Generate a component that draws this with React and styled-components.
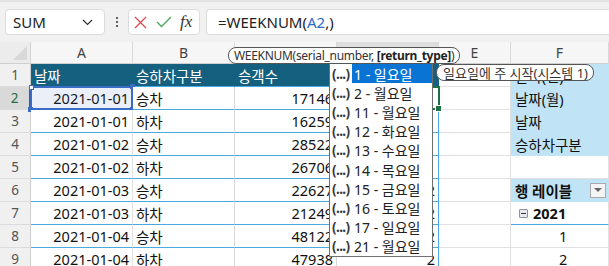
import React from 'react'
import styled, { createGlobalStyle } from 'styled-components'

const GlobalStyle = createGlobalStyle`
  body {
    margin: 0;
    background: #fff;
    font-family: "Noto Sans", "Noto Sans CJK KR", sans-serif;
    overflow: hidden;
  }
`

const tableRows = [
  { date: '2021-01-01', kind: '승차', count: '17146', week: '1' },
  { date: '2021-01-01', kind: '하차', count: '16259', week: '1' },
  { date: '2021-01-02', kind: '승차', count: '28522', week: '1' },
  { date: '2021-01-02', kind: '하차', count: '26706', week: '1' },
  { date: '2021-01-03', kind: '승차', count: '22627', week: '2' },
  { date: '2021-01-03', kind: '하차', count: '21249', week: '2' },
  { date: '2021-01-04', kind: '승차', count: '48122', week: '2' },
  { date: '2021-01-04', kind: '하차', count: '47938', week: '2' },
]

const weekOptions = [
  ['1', '일요일'], ['2', '월요일'], ['11', '월요일'], ['12', '화요일'], ['13', '수요일'],
  ['14', '목요일'], ['15', '금요일'], ['16', '토요일'], ['17', '일요일'], ['21', '월요일'],
]

const Page = styled.div`
  width: 609px;
  height: 266px;
  overflow: hidden;
`

/* ---------- formula bar ---------- */
const TopBar = styled.div`
  height: 42px;
  box-sizing: border-box;
  background: #f1f1f1;
  border-top: 2px solid #e4e4e4;
  display: flex;
  align-items: center;
  padding-left: 5px;
`
const NameBox = styled.div`
  width: 100px;
  height: 26px;
  box-sizing: border-box;
  background: #fff;
  border: 1px solid #dcdcdc;
  border-radius: 4px;
  display: flex;
  align-items: center;
  justify-content: space-between;
  padding: 0 11px 0 7px;
  font-size: 15px;
  color: #222;
`
const Dots = styled.div`
  width: 23px;
  display: flex;
  flex-direction: column;
  align-items: center;
  gap: 2px;
  span {
    width: 2px;
    height: 2px;
    background: #333;
    border-radius: 1px;
  }
`
const ButtonBox = styled.div`
  width: 72px;
  height: 26px;
  box-sizing: border-box;
  background: #fff;
  border: 1px solid #dcdcdc;
  border-radius: 4px;
  display: flex;
  align-items: center;
  padding-left: 5px;
  gap: 9px;
`
const Fx = styled.span`
  font-family: "Liberation Serif", serif;
  font-style: italic;
  font-size: 17px;
  color: #333;
  margin-left: -1px;
`
const Formula = styled.div`
  flex: 1;
  margin-left: 6px;
  height: 26px;
  box-sizing: border-box;
  background: #fff;
  border: 1px solid #dcdcdc;
  border-right: none;
  border-radius: 4px 0 0 4px;
  display: flex;
  align-items: center;
  padding-left: 11px;
  font-size: 15px;
  color: #222;
`
const Ref = styled.span`
  color: #2c6bc9;
`

/* ---------- grid ---------- */
const Sheet = styled.div`
  position: relative;
  display: grid;
  grid-template-columns: 31px 102px 102px 102px 102px 72px 98px;
  grid-template-rows: 22px repeat(9, 23px);
`
const Corner = styled.div`
  background: #ececec;
  border-right: 1px solid #d4d4d4;
  border-bottom: 1px solid #cfcfcf;
  position: relative;
  &::after {
    content: '';
    position: absolute;
    right: 3px;
    bottom: 3px;
    border-left: 14px solid transparent;
    border-bottom: 14px solid #d8d8d8;
  }
`
const ColHead = styled.div`
  display: flex;
  align-items: center;
  justify-content: center;
  font-size: 14px;
  color: #444;
  background: ${p => (p.$active ? '#dedede' : '#f6f6f6')};
  border-right: 1px solid #d9d9d9;
  border-bottom: ${p => (p.$active ? '2px solid #217346' : '1px solid #cfcfcf')};
`
const RowHead = styled.div`
  display: flex;
  align-items: center;
  justify-content: center;
  font-size: 13.5px;
  color: ${p => (p.$active ? '#1d6e41' : '#555')};
  background: ${p => (p.$active ? '#d9d9d9' : '#f0f0f0')};
  border-right: ${p => (p.$active ? '2px solid #217346' : '1px solid #cfcfcf')};
  border-bottom: 1px solid #dcdcdc;
`
const Cell = styled.div`
  position: relative;
  display: flex;
  align-items: center;
  justify-content: ${p => (p.$right ? 'flex-end' : 'flex-start')};
  padding: 0 ${p => (p.$right ? '3px' : '0')} 0 ${p => p.$indent || 3}px;
  font-size: 14.5px;
  font-weight: ${p => (p.$bold ? 700 : 400)};
  color: #111;
  white-space: nowrap;
  background: ${p => p.$bg || '#fff'};
  border-right: 1px solid ${p => p.$vline || '#e1e1e1'};
  border-bottom: 1px solid ${p => p.$hline || '#e1e1e1'};
`
const HeadCell = styled(Cell)`
  color: #fff;
  background: #16607f;
  border-right-color: #16607f;
  border-bottom-color: #4aa9de;
`
const RefBox = styled.div`
  position: absolute;
  inset: -1px -1px -1px -1px;
  border: 2px solid #3b6cc4;
  background: rgba(60, 100, 190, 0.1);
  pointer-events: none;
  span {
    position: absolute;
    width: 5px;
    height: 5px;
    background: #3b6cc4;
  }
`
const ActiveBox = styled.div`
  position: absolute;
  inset: -1px -2px -1px -1px;
  border: 2px solid #1e7145;
  z-index: 1;
  &::after {
    content: '';
    position: absolute;
    right: -4px;
    bottom: -4px;
    width: 5px;
    height: 5px;
    background: #1e7145;
    border: 1px solid #fff;
  }
`
const FilterButton = styled.div`
  margin-left: auto;
  margin-right: 2px;
  width: 16px;
  height: 15px;
  box-sizing: border-box;
  border: 1px solid #a9a9a9;
  background: #f4f4f4;
  display: flex;
  align-items: center;
  justify-content: center;
  &::after {
    content: '';
    border-left: 4px solid transparent;
    border-right: 4px solid transparent;
    border-top: 4px solid #666;
  }
`
const Collapse = styled.span`
  width: 9px;
  height: 9px;
  box-sizing: border-box;
  border: 1px solid #8a94a6;
  background: #e6e9ee;
  border-radius: 1px;
  margin-right: 5px;
  display: flex;
  align-items: center;
  justify-content: center;
  &::after {
    content: '';
    width: 5px;
    height: 1px;
    background: #3a3a3a;
  }
`

/* ---------- popups ---------- */
const Tip = styled.div`
  position: absolute;
  z-index: 6;
  height: 17px;
  box-sizing: border-box;
  background: #fff;
  border: 1.5px solid #555;
  border-radius: 8px;
  display: flex;
  align-items: center;
  color: #333;
  white-space: nowrap;
`
const SyntaxTip = styled(Tip)`
  left: 228px;
  top: 5px;
  padding: 0 5px;
  font-size: 12px;
  letter-spacing: -0.3px;
  b {
    font-weight: 700;
    color: #222;
  }
`
const HintTip = styled(Tip)`
  left: 436px;
  top: 22px;
  padding: 0 5px 0 6px;
  font-size: 13px;
`
const Dropdown = styled.ul`
  position: absolute;
  z-index: 5;
  left: 329px;
  top: 21px;
  width: 104px;
  margin: 0;
  padding: 0;
  list-style: none;
  box-sizing: border-box;
  background: #fff;
  border: 1px solid #707070;
`
const Option = styled.li`
  display: flex;
  height: 19.2px;
`
const OptIcon = styled.span`
  width: 20px;
  display: flex;
  align-items: center;
  padding-left: 2px;
  font-size: 13.5px;
  font-weight: 700;
  letter-spacing: -0.6px;
  color: #3a3a3a;
`
const OptLabel = styled.span`
  flex: 1;
  display: flex;
  align-items: center;
  padding-left: 2px;
  font-size: 14px;
  color: ${p => (p.$active ? '#fff' : '#222')};
  background: ${p => (p.$active ? '#0a74d4' : 'transparent')};
`

const pivotBlue = '#c0e4f5'
const rowLine = '#4aa9de'

const pivotCells = [
  { text: '날짜(연)', bg: pivotBlue },
  { text: '날짜(월)', bg: pivotBlue },
  { text: '날짜', bg: pivotBlue },
  { text: '승하차구분', bg: pivotBlue },
  { text: '' },
]

function PivotColumn(i) {
  if (i < 5) {
    const c = pivotCells[i]
    return (
      <Cell key="f" $bg={c.bg} $vline={c.bg || '#e1e1e1'} $hline={c.bg || '#e1e1e1'} $indent={4}>
        {c.text}
      </Cell>
    )
  }
  if (i === 5) {
    return (
      <Cell key="f" $bg={pivotBlue} $vline={pivotBlue} $hline={pivotBlue} $indent={4} $bold>
        행 레이블
        <FilterButton />
      </Cell>
    )
  }
  if (i === 6) {
    return (
      <Cell key="f" $hline={rowLine} $indent={8} $bold>
        <Collapse />
        2021
      </Cell>
    )
  }
  return (
    <Cell key="f" $indent={48}>
      {i - 6}
    </Cell>
  )
}

export default function App() {
  return (
    <Page>
      <GlobalStyle />
      <TopBar>
        <NameBox>
          SUM
          <svg width="11" height="7" viewBox="0 0 11 7">
            <polyline points="1,1 5.5,5.5 10,1" fill="none" stroke="#333" strokeWidth="1.2" />
          </svg>
        </NameBox>
        <Dots>
          <span />
          <span />
          <span />
        </Dots>
        <ButtonBox>
          <svg width="13" height="13" viewBox="0 0 13 13">
            <path d="M1 1 L12 12 M12 1 L1 12" stroke="#e2494f" strokeWidth="1.3" />
          </svg>
          <svg width="16" height="12" viewBox="0 0 16 12">
            <polyline points="1,6 5.5,10.5 15,1" fill="none" stroke="#4aa85a" strokeWidth="1.3" />
          </svg>
          <Fx>fx</Fx>
        </ButtonBox>
        <Formula>
          =WEEKNUM(<Ref>A2</Ref>,)
        </Formula>
      </TopBar>

      <Sheet>
        <Corner />
        {['A', 'B', 'C', 'D', 'E', 'F'].map(l => (
          <ColHead key={l} $active={l === 'D'}>{l}</ColHead>
        ))}

        <RowHead>1</RowHead>
        <HeadCell>날짜</HeadCell>
        <HeadCell>승하차구분</HeadCell>
        <HeadCell>승객수</HeadCell>
        <HeadCell $vline={rowLine} />
        <Cell />
        {PivotColumn(0)}

        {tableRows.map((r, i) => (
          <React.Fragment key={i}>
            <RowHead $active={i === 0}>{i + 2}</RowHead>
            <Cell $right $hline={rowLine}>
              {r.date}
              {i === 0 && (
                <RefBox>
                  <span style={{ left: -3, top: -3, background: '#fff', border: '1px solid #3b6cc4', width: 3, height: 3 }} />
                  <span style={{ right: -4, top: -4 }} />
                  <span style={{ right: -4, bottom: -4 }} />
                  <span style={{ left: -4, bottom: -4 }} />
                </RefBox>
              )}
            </Cell>
            <Cell $hline={rowLine} $vline="#d9d9d9">{r.kind}</Cell>
            <Cell $right $hline={rowLine} $vline="#d9d9d9">{r.count}</Cell>
            <Cell $right $hline={rowLine} $vline={rowLine}>
              {r.week}
              {i === 0 && <ActiveBox />}
            </Cell>
            <Cell />
            {PivotColumn(i + 1)}
          </React.Fragment>
        ))}

        <SyntaxTip>
          WEEKNUM(serial_number,&nbsp;<b>[return_type]</b>)
        </SyntaxTip>
        <HintTip>일요일에 주 시작(시스템 1)</HintTip>

        <Dropdown>
          {weekOptions.map(([n, day], i) => (
            <Option key={n}>
              <OptIcon>(...)</OptIcon>
              <OptLabel $active={i === 0}>
                {n} - {day}
              </OptLabel>
            </Option>
          ))}
        </Dropdown>
      </Sheet>
    </Page>
  )
}
